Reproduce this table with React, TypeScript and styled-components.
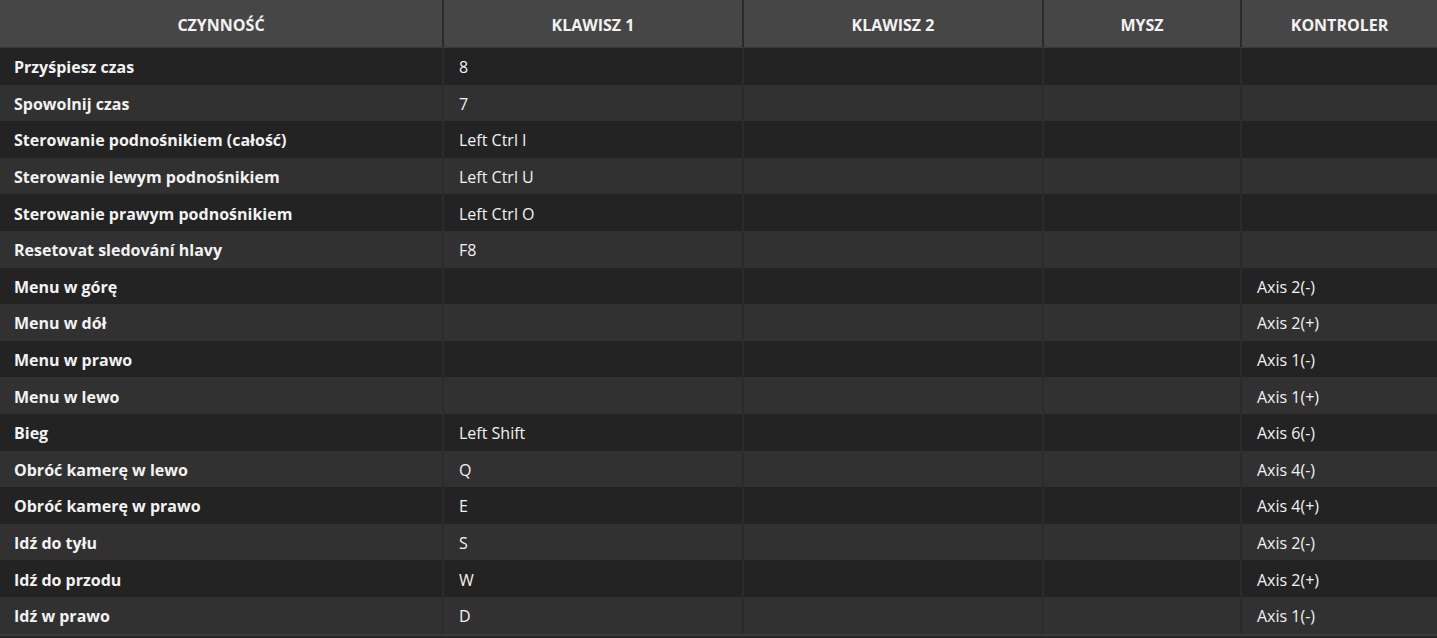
import React from "react";
import styled, { createGlobalStyle } from "styled-components";

const GlobalStyle = createGlobalStyle`
  html, body {
    margin: 0;
    padding: 0;
    background: #262626;
    font-family: "Open Sans", "Noto Sans", sans-serif;
  }
`;

const columns = "442px 298px 298px 196px 1fr";

const Table = styled.div`
  width: 1437px;
  display: flex;
  flex-direction: column;
  background: #2a2a2a;
  border-bottom: 2px solid #3a3a3a;
`;

const HeaderRow = styled.div`
  display: grid;
  grid-template-columns: ${columns};
  column-gap: 2px;
  background: #2a2a2a;
  border-bottom: 1px solid #3a3a3a;
`;

const HeaderCell = styled.div`
  height: 47px;
  padding-top: 2px;
  box-sizing: border-box;
  display: flex;
  align-items: center;
  justify-content: center;
  background: #464646;
  color: #f2f2f2;
  font-size: 16px;
  font-weight: 700;
  text-transform: uppercase;
`;

const Row = styled.div`
  display: grid;
  grid-template-columns: ${columns};
  column-gap: 2px;
  background: #2b2b2b;
`;

const Cell = styled.div<{ $odd: boolean; $bold?: boolean }>`
  height: 36.6px;
  box-sizing: border-box;
  padding-top: 2px;
  display: flex;
  align-items: center;
  padding-left: ${(p) => (p.$bold ? "14px" : "15px")};
  background: ${(p) => (p.$odd ? "#232323" : "#313131")};
  color: #f2f2f2;
  font-size: 16px;
  font-weight: ${(p) => (p.$bold ? 700 : 400)};
  white-space: nowrap;
`;

const headers = ["Czynność", "Klawisz 1", "Klawisz 2", "Mysz", "Kontroler"];

const rows: [string, string, string, string, string][] = [
  ["Przyśpiesz czas", "8", "", "", ""],
  ["Spowolnij czas", "7", "", "", ""],
  ["Sterowanie podnośnikiem (całość)", "Left Ctrl I", "", "", ""],
  ["Sterowanie lewym podnośnikiem", "Left Ctrl U", "", "", ""],
  ["Sterowanie prawym podnośnikiem", "Left Ctrl O", "", "", ""],
  ["Resetovat sledování hlavy", "F8", "", "", ""],
  ["Menu w górę", "", "", "", "Axis 2(-)"],
  ["Menu w dół", "", "", "", "Axis 2(+)"],
  ["Menu w prawo", "", "", "", "Axis 1(-)"],
  ["Menu w lewo", "", "", "", "Axis 1(+)"],
  ["Bieg", "Left Shift", "", "", "Axis 6(-)"],
  ["Obróć kamerę w lewo", "Q", "", "", "Axis 4(-)"],
  ["Obróć kamerę w prawo", "E", "", "", "Axis 4(+)"],
  ["Idź do tyłu", "S", "", "", "Axis 2(-)"],
  ["Idź do przodu", "W", "", "", "Axis 2(+)"],
  ["Idź w prawo", "D", "", "", "Axis 1(-)"],
];

export default function App() {
  return (
    <>
      <GlobalStyle />
      <Table>
        <HeaderRow>
          {headers.map((h) => (
            <HeaderCell key={h}>{h}</HeaderCell>
          ))}
        </HeaderRow>
        {rows.map((r, i) => (
          <Row key={r[0]}>
            {r.map((v, j) => (
              <Cell key={j} $odd={i % 2 === 0} $bold={j === 0}>
                {v}
              </Cell>
            ))}
          </Row>
        ))}
      </Table>
    </>
  );
}
